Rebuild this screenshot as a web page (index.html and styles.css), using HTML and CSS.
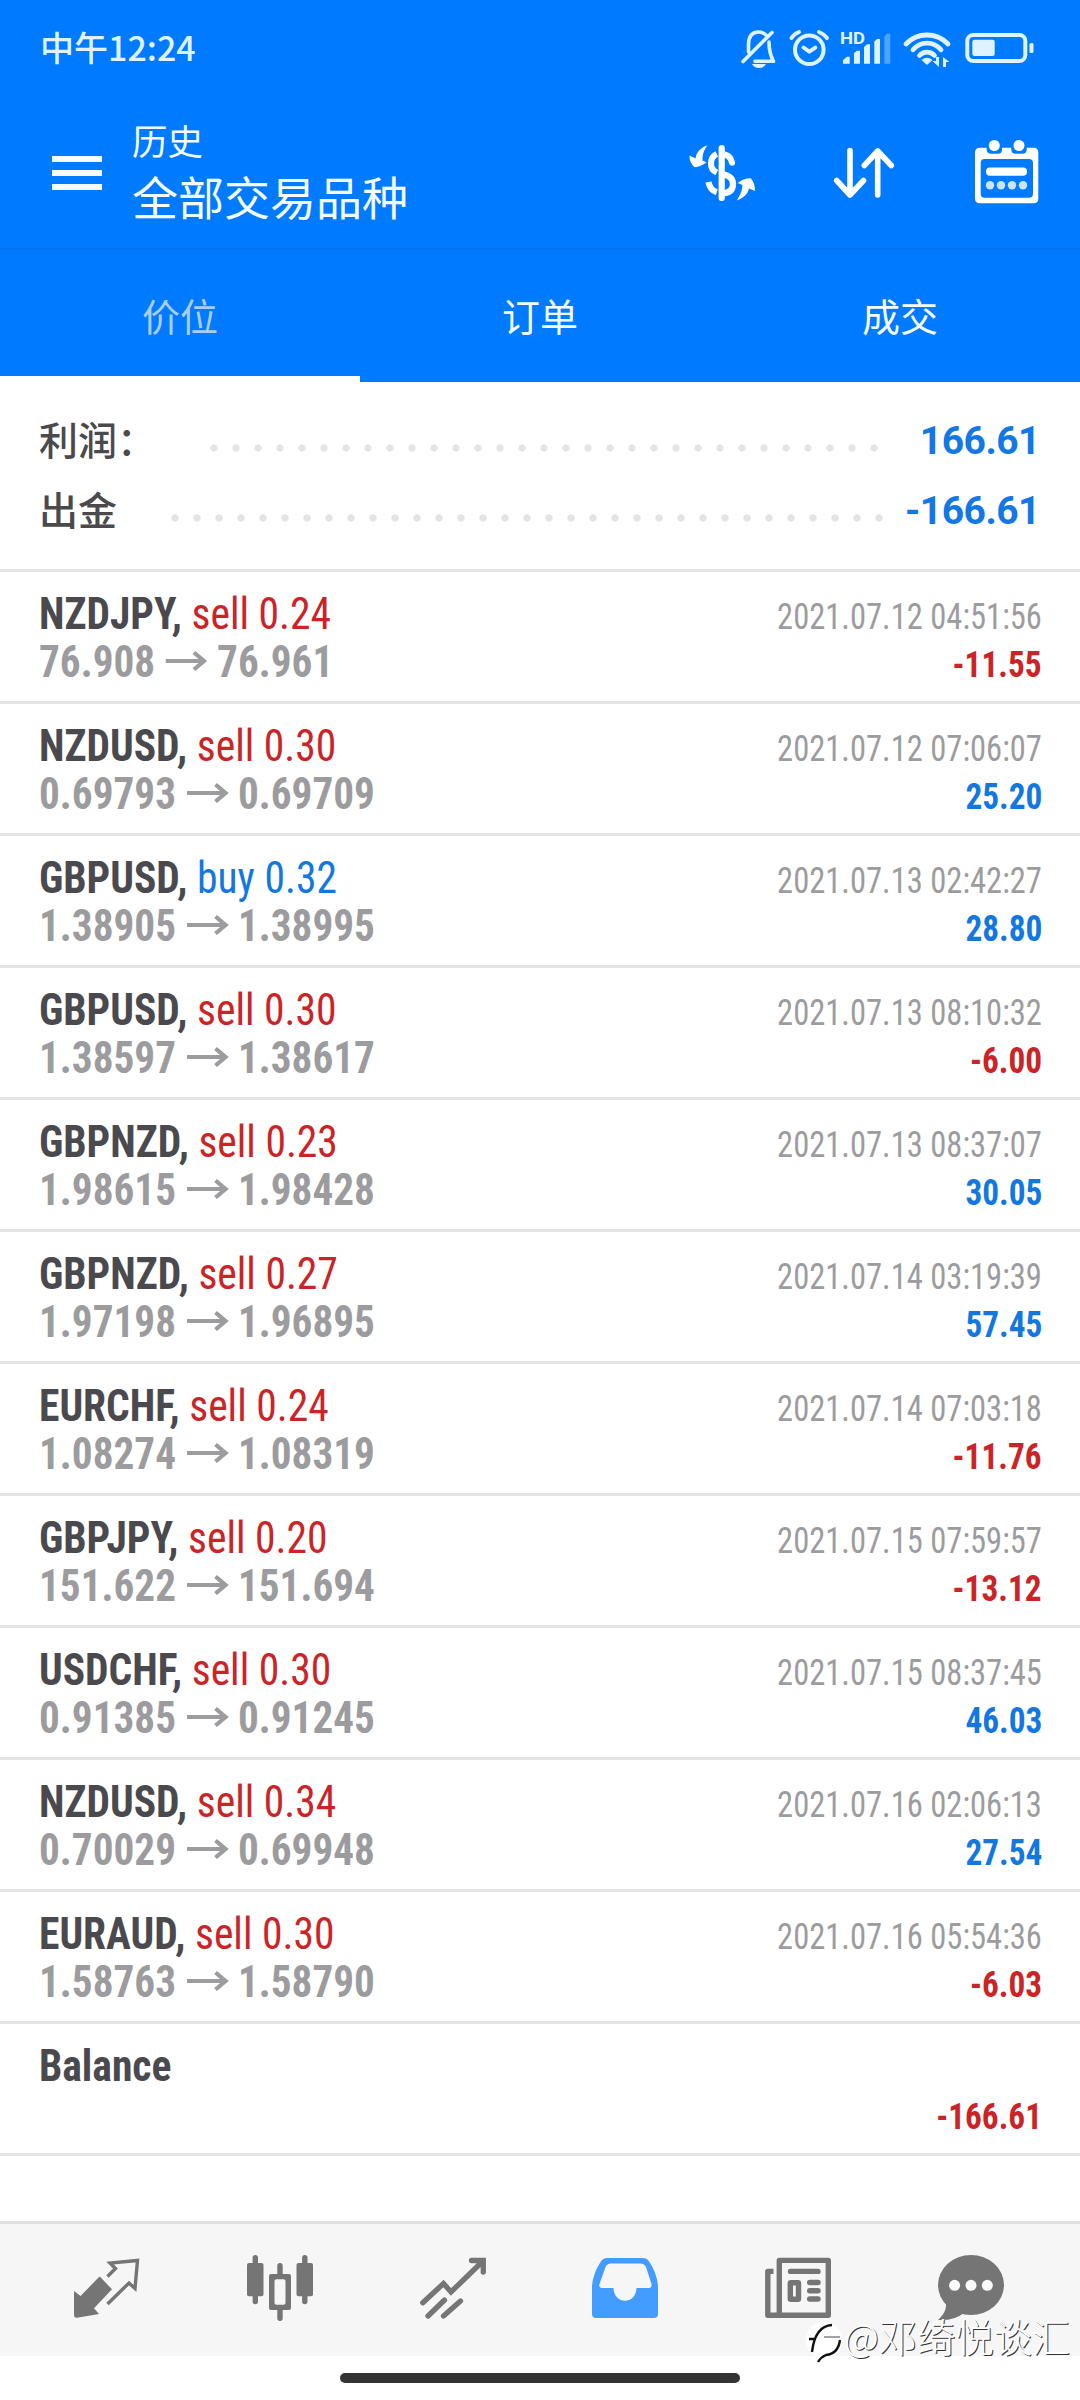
FILE: index.html
```html
<!DOCTYPE html>
<html lang="zh-CN">
<head>
<meta charset="utf-8">
<title>历史</title>
<link rel="stylesheet" href="styles.css">
</head>
<body>
<svg width="0" height="0" class="defs"><defs>
<symbol id="arr" viewBox="0 0 42 22" preserveAspectRatio="none"><path d="M0 11H39M28.500 2.500L38.500 11L28.500 19.500" fill="none" stroke="currentColor" stroke-width="4.200"/></symbol>
</defs></svg>
<header class="top">
  <div class="status">
    <span class="clock">中午12:24</span>
    <div class="status-icons">
      <svg width="36" height="40" viewBox="0 0 36 40"><path d="M7.500 23V15Q8 3 17.500 3Q22 3 25 6M28 13Q28 24 32.500 32.300H14M31 3.500L2 32.500" class="ln"/><path class="fl" d="M11 35H25Q23 39 18 39Q13 39 11 35Z"/></svg>
      <svg width="40" height="40" viewBox="0 0 40 40"><circle cx="20.300" cy="20.700" r="14.300" class="ln w4"/><path class="ln w4" d="M2.500 9Q5 5 10 3M30 3Q35 5 38 9M14.500 18.500L20.300 22.700L26.300 18.700"/></svg>
      <svg width="49" height="40" viewBox="0 0 49 40"><text x="-1" y="15" class="hd" textLength="25" lengthAdjust="spacingAndGlyphs">HD</text><path class="fl" d="M2 34.700V31L6 27.700H8.700V34.700ZM13 34.700V24L16 21.700H19V34.700ZM23 34.700V18L26 15.300H29V34.700ZM33.300 34.700V12.500L36 10H39V34.700Z"/><path class="fl dim" d="M43.300 34.700V7.500L46 4.700H49.300V34.700Z"/></svg>
      <svg width="48" height="40" viewBox="0 0 48 40"><path class="ln w5" d="M4 15A29 29 0 0 1 46 15M11 20.800A18 18 0 0 1 39 20.800M17.500 26.500A10 10 0 0 1 32.500 26.500"/><path class="fl" d="M19.500 31Q25 26.500 30.500 31L25 36Z"/><path class="fl" d="M37 28V38L30.500 32H34V28ZM41 38V28L47.500 33H44V38Z"/></svg>
      <svg width="72" height="40" viewBox="0 0 72 40"><rect x="5.300" y="6" width="58" height="26" rx="6" class="ln w4"/><rect x="10.300" y="10.700" width="22.400" height="16.300" rx="2" class="fl"/><rect x="67.500" y="14" width="4" height="10" rx="1.500" class="fl"/></svg>
    </div>
  </div>
  <div class="bar">
    <div class="menu"><i></i><i></i><i></i></div>
    <div class="titles"><div class="sub">历史</div><div class="main">全部交易品种</div></div>
    <div class="actions">
      <svg width="66" height="66" viewBox="0 0 66 66"><path fill="#fff" d="M18.700 5.300C11 8 7.500 12 6.500 18.500L.5 15.500Q0 22 5.500 27.300Q12 27 17.500 22.300L13.500 20.500C13.500 14 15 9.500 18.700 5.300ZM47.700 60.500C56 57 58.500 54 60 48.500L66 51Q66 43 61.700 38.300Q54 38.500 48.700 43L53.500 45C53 51 51.500 55 47.700 60.500Z"/><g fill="none" stroke="#fff" stroke-width="6.200"><path d="M32.700 8V58" stroke-linecap="round"/><path d="M27.800 14Q22 16.500 22 23.500Q22 30 27.800 32.500M27.800 52.300Q21 50 19.500 42"/><path d="M33 14Q41.500 14.500 43 22.500" stroke-linecap="round"/><path d="M33 34Q44 36 44 44Q44 53 33 53.500"/></g></svg>
      <svg width="66" height="66" viewBox="0 0 66 66"><path fill="none" stroke="#fff" stroke-width="5.600" stroke-linecap="round" stroke-linejoin="round" d="M19 10.500V55M5.700 40.500L19 55L32.500 40.500M46.700 55V11M33.300 25.500L46.700 11L60.300 25.500"/></svg>
      <svg width="66" height="66" viewBox="0 0 66 66"><path fill="#fff" fill-rule="evenodd" d="M6 7.700H12.700V10Q13 13.700 17 13.700H24Q28 13.700 28 10V7.700H37.300V10Q37.500 13.700 41.500 13.700H48.500Q52.500 13.700 52.700 10V7.700H59.500Q64.300 7.700 64.300 12.500V58.500Q64.300 63.300 59.500 63.300H6Q1 63.300 1 58.500V12.500Q1 7.700 6 7.700ZM10.500 19Q6.700 19 6.700 23V54Q6.700 57.700 10.500 57.700H55Q59 57.700 59 54V23Q59 19 55 19Z"/><circle cx="20.300" cy="5.500" r="5.500" fill="#fff"/><circle cx="45" cy="5.500" r="5.500" fill="#fff"/><rect x="12" y="27.500" width="41" height="8.300" rx="4" fill="#fff"/><g fill="#fff" opacity=".8"><circle cx="16" cy="45.300" r="4.200"/><circle cx="27" cy="45.300" r="4.200"/><circle cx="38" cy="45.300" r="4.200"/><circle cx="49" cy="45.300" r="4.200"/></g></svg>
    </div>
  </div>
  <nav class="tabs"><span class="tab on">价位</span><span class="tab">订单</span><span class="tab">成交</span></nav>
</header>
<section class="summary">
  <div class="sum s1"><span>利润：</span><i></i><b>166.61</b></div>
  <div class="sum s2"><span>出金</span><i></i><b>-166.61</b></div>
</section>
<main class="list">
  <div class="row"><p><span class="name"><b>NZDJPY,</b> <em class="sell">sell 0.24</em></span><time>2021.07.12 04:51:56</time></p><p><span class="px">76.908<svg><use href="#arr"/></svg>76.961</span><strong class="neg">-11.55</strong></p></div>
  <div class="row"><p><span class="name"><b>NZDUSD,</b> <em class="sell">sell 0.30</em></span><time>2021.07.12 07:06:07</time></p><p><span class="px">0.69793<svg><use href="#arr"/></svg>0.69709</span><strong class="pos">25.20</strong></p></div>
  <div class="row"><p><span class="name"><b>GBPUSD,</b> <em class="buy">buy 0.32</em></span><time>2021.07.13 02:42:27</time></p><p><span class="px">1.38905<svg><use href="#arr"/></svg>1.38995</span><strong class="pos">28.80</strong></p></div>
  <div class="row"><p><span class="name"><b>GBPUSD,</b> <em class="sell">sell 0.30</em></span><time>2021.07.13 08:10:32</time></p><p><span class="px">1.38597<svg><use href="#arr"/></svg>1.38617</span><strong class="neg">-6.00</strong></p></div>
  <div class="row"><p><span class="name"><b>GBPNZD,</b> <em class="sell">sell 0.23</em></span><time>2021.07.13 08:37:07</time></p><p><span class="px">1.98615<svg><use href="#arr"/></svg>1.98428</span><strong class="pos">30.05</strong></p></div>
  <div class="row"><p><span class="name"><b>GBPNZD,</b> <em class="sell">sell 0.27</em></span><time>2021.07.14 03:19:39</time></p><p><span class="px">1.97198<svg><use href="#arr"/></svg>1.96895</span><strong class="pos">57.45</strong></p></div>
  <div class="row"><p><span class="name"><b>EURCHF,</b> <em class="sell">sell 0.24</em></span><time>2021.07.14 07:03:18</time></p><p><span class="px">1.08274<svg><use href="#arr"/></svg>1.08319</span><strong class="neg">-11.76</strong></p></div>
  <div class="row"><p><span class="name"><b>GBPJPY,</b> <em class="sell">sell 0.20</em></span><time>2021.07.15 07:59:57</time></p><p><span class="px">151.622<svg><use href="#arr"/></svg>151.694</span><strong class="neg">-13.12</strong></p></div>
  <div class="row"><p><span class="name"><b>USDCHF,</b> <em class="sell">sell 0.30</em></span><time>2021.07.15 08:37:45</time></p><p><span class="px">0.91385<svg><use href="#arr"/></svg>0.91245</span><strong class="pos">46.03</strong></p></div>
  <div class="row"><p><span class="name"><b>NZDUSD,</b> <em class="sell">sell 0.34</em></span><time>2021.07.16 02:06:13</time></p><p><span class="px">0.70029<svg><use href="#arr"/></svg>0.69948</span><strong class="pos">27.54</strong></p></div>
  <div class="row"><p><span class="name"><b>EURAUD,</b> <em class="sell">sell 0.30</em></span><time>2021.07.16 05:54:36</time></p><p><span class="px">1.58763<svg><use href="#arr"/></svg>1.58790</span><strong class="neg">-6.03</strong></p></div>
  <div class="row"><p><span class="name"><b>Balance</b></span></p><p><span class="px">&nbsp;</span><strong class="neg">-166.61</strong></p></div>
</main>
<footer class="nav">
  <a><svg width="66" height="66" viewBox="0 0 66 66"><path d="M33.500 21.500L41.500 13.500L36 8L63.500 5.500L61 33.500L55 28L33.500 49" fill="none" stroke="#757575" stroke-width="3.400"/><path fill="#757575" d="M26 21.700L38 34.300L20 53.300L25 59L3 62.700Q0 63 0 60V36L6.600 41L24.500 22.500Q26 21 27.500 22.500Z"/></svg></a>
  <a><svg width="66" height="66" viewBox="0 0 66 66"><g fill="#757575"><rect y="8" width="16.500" height="33.300" rx="2"/><rect x="49.500" y="8" width="16.500" height="33.300" rx="2"/><path fill-rule="evenodd" d="M24 19H42Q44 19 44 21V53Q44 55 42 55H24Q22 55 22 53V21Q22 19 24 19ZM27.500 26V48Q27.500 49.700 29.500 49.700H36.500Q38.500 49.700 38.500 48V26Q38.500 24.300 36.500 24.300H29.500Q27.500 24.300 27.500 26Z"/></g><path stroke="#757575" stroke-width="5.400" stroke-linecap="round" d="M8.300 2.700V46.500M57.800 2.700V46.500M33 10.700V19M33 55V63.300"/></svg></a>
  <a><svg width="66" height="66" viewBox="0 0 66 66"><path d="M2.800 47.700L23.500 28.500L31 37L63 6M51.500 5.500H63.300V17M8 61L24.500 45M23.500 61L40.500 46" fill="none" stroke="#757575" stroke-width="5.300" stroke-linecap="round"/></svg></a>
  <a><svg width="66" height="66" viewBox="0 0 66 66"><path fill="#439cff" fill-rule="evenodd" d="M0 59V31Q1 18 9.500 5.500Q11.500 3 14.500 3H51.500Q54.500 3 56.500 5.500Q65 18 66 31V59Q66 63 62 63H4Q0 63 0 59ZM19 8.500Q15 8.500 13.500 12L7.500 29Q6.500 33 10 33H21.500C22 50 44 50 44.500 33H57Q60 33 59.500 29L54 12Q52.500 8.500 48 8.500Z"/></svg></a>
  <a><svg width="66" height="66" viewBox="0 0 66 66"><g fill="none" stroke="#757575" stroke-width="5.400"><path stroke-linejoin="round" d="M14.300 60.300V5.400H63.300V60.300H2.800V16.400H8.500"/><path stroke-linecap="round" d="M25.500 16.400H53M44.700 27.500H53M44.700 35.700H53M44.700 44H53"/><rect x="25.300" y="27.700" width="8.200" height="16.600" rx=".5"/></g></svg></a>
  <a><svg width="66" height="66" viewBox="0 0 66 66"><ellipse cx="33" cy="30" rx="33" ry="30" fill="#757575"/><path d="M6 43Q12 54 0 65Q16 66 26 58Z" fill="#757575"/><g fill="#fafafa"><circle cx="16.600" cy="30.300" r="5.500"/><circle cx="33" cy="30.300" r="5.500"/><circle cx="49.300" cy="30.300" r="5.500"/></g></svg></a>
</footer>
<div class="home"><i></i></div>
<div class="mark"><svg width="38" height="46" viewBox="0 0 38 46"><circle cx="18" cy="20" r="18" fill="#fff"/><path d="M6 32Q9 6 26 5M3 19H9M34 20Q32 34 20 35Q15 37 12 42" fill="none" stroke="#111" stroke-width="2.400"/><path d="M18 17H34" stroke="#666" stroke-width="1.200"/></svg><span>@邓绮悦谈汇</span></div>
</body>
</html>
```
FILE: styles.css
```css
* { box-sizing: border-box; }
body {
  margin: 0;
  width: 1080px;
  height: 2400px;
  overflow: hidden;
  display: flex;
  flex-direction: column;
  position: relative;
  background: #fff;
  font-family: Roboto, "Noto Sans CJK SC", sans-serif;
  color: #4a4a4e;
}
p { margin: 0; }
svg { display: block; overflow: visible; }
.defs { position: absolute; }

.top { background: #007aff; color: #f4fcff; height: 382px; font-family: "Noto Sans CJK SC", sans-serif; }
.status { height: 98px; display: flex; justify-content: space-between; padding: 0 46px 0 40px; }
.clock { margin-top: 22px; font-size: 34px; line-height: 50px; font-weight: 500; color: #dff2ff; }
.status-icons { display: flex; gap: 12px; padding-top: 29px; }
.ln { fill: none; stroke: #dff2ff; stroke-width: 3.600; stroke-linecap: round; stroke-linejoin: round; }
.w4 { stroke-width: 4; }
.w5 { stroke-width: 4.800; }
.fl { fill: #dff2ff; }
.dim { opacity: .35; }
.hd { font: 700 16.500px Roboto, sans-serif; fill: #dff2ff; }

.bar { height: 152px; display: flex; border-bottom: 2px solid #0073f0; }
.menu { width: 132px; padding: 58px 0 0 52px; display: flex; flex-direction: column; gap: 8px; }
.menu i { width: 50px; height: 6px; background: #f4fcff; }
.titles { flex: 1; padding-top: 18px; }
.sub { font-size: 35.500px; line-height: 48px; }
.main { font-size: 46px; line-height: 60px; margin-top: 1px; }
.actions { display: flex; padding: 42px 2px 0 0; }
.actions svg { width: 66px; margin: 0 38.250px; }

.tabs { display: grid; grid-template-columns: repeat(3, 1fr); height: 132px; }
.tab { text-align: center; font-size: 38px; line-height: 130px; height: 132px; }
.tab.on { color: #a9cdf2; border-bottom: 6px solid #fff; }

.summary { height: 190px; padding: 24px 40px 0 39px; border-bottom: 3px solid #e4e4e4; }
.sum { display: flex; height: 70px; line-height: 70px; }
.sum span { font: 500 39px/64px "Noto Sans CJK SC", sans-serif; width: 124.500px; color: #4a4a4c; }
.sum i { height: 22px; margin-top: 31px; background: radial-gradient(circle, #e4e4e4 3.300px, transparent 4px) 0 0 / 22px 22px; }
.s1 i { width: 682px; margin-left: 39px; }
.s2 i { width: 726px; }
.sum b { margin-left: auto; font-size: 39px; letter-spacing: -.5px; color: #1377e6; }

.list { height: 1649px; font-stretch: 75%; }
.row { height: 132px; padding: 18px 38px 0 39px; border-bottom: 3px solid #e4e4e4; }
.row p { display: flex; justify-content: space-between; align-items: baseline; height: 48px; line-height: 48px; font-size: 44px; }
.row em { font-style: normal; }
.name { transform: scaleX(.944); transform-origin: left; }
.row time { font-size: 36.500px; color: #9c9c9f; transform: scaleX(.892); transform-origin: right; }
.row strong { font-size: 36.500px; transform: scaleX(.912); transform-origin: right; }
.px { font-weight: 700; color: #9c9c9f; transform: scaleX(.937); transform-origin: left; }
.px svg { display: inline-block; width: 44.800px; height: 22px; margin: 0 9.800px 0 11.500px; vertical-align: 5.500px; }
.sell, .neg { color: #cb2427; }
.buy, .pos { color: #1377e0; }

.nav { height: 135px; background: #f6f6f6; border-top: 3px solid #e0e0e0; padding: 31px 23px 0 21px; display: grid; grid-template-columns: repeat(6, 1fr); justify-items: center; }
.home { flex: 1; padding-top: 17px; }
.home i { display: block; width: 400px; height: 10px; margin: 0 auto; border-radius: 5px; background: #333; }

.mark { position: absolute; left: 806px; top: 2320px; display: flex; color: #fff; }
.mark span { font: 300 38.300px/40px "Noto Sans CJK SC", sans-serif; margin-top: -4px; text-shadow: 1px 1px 0 #333; }
```
